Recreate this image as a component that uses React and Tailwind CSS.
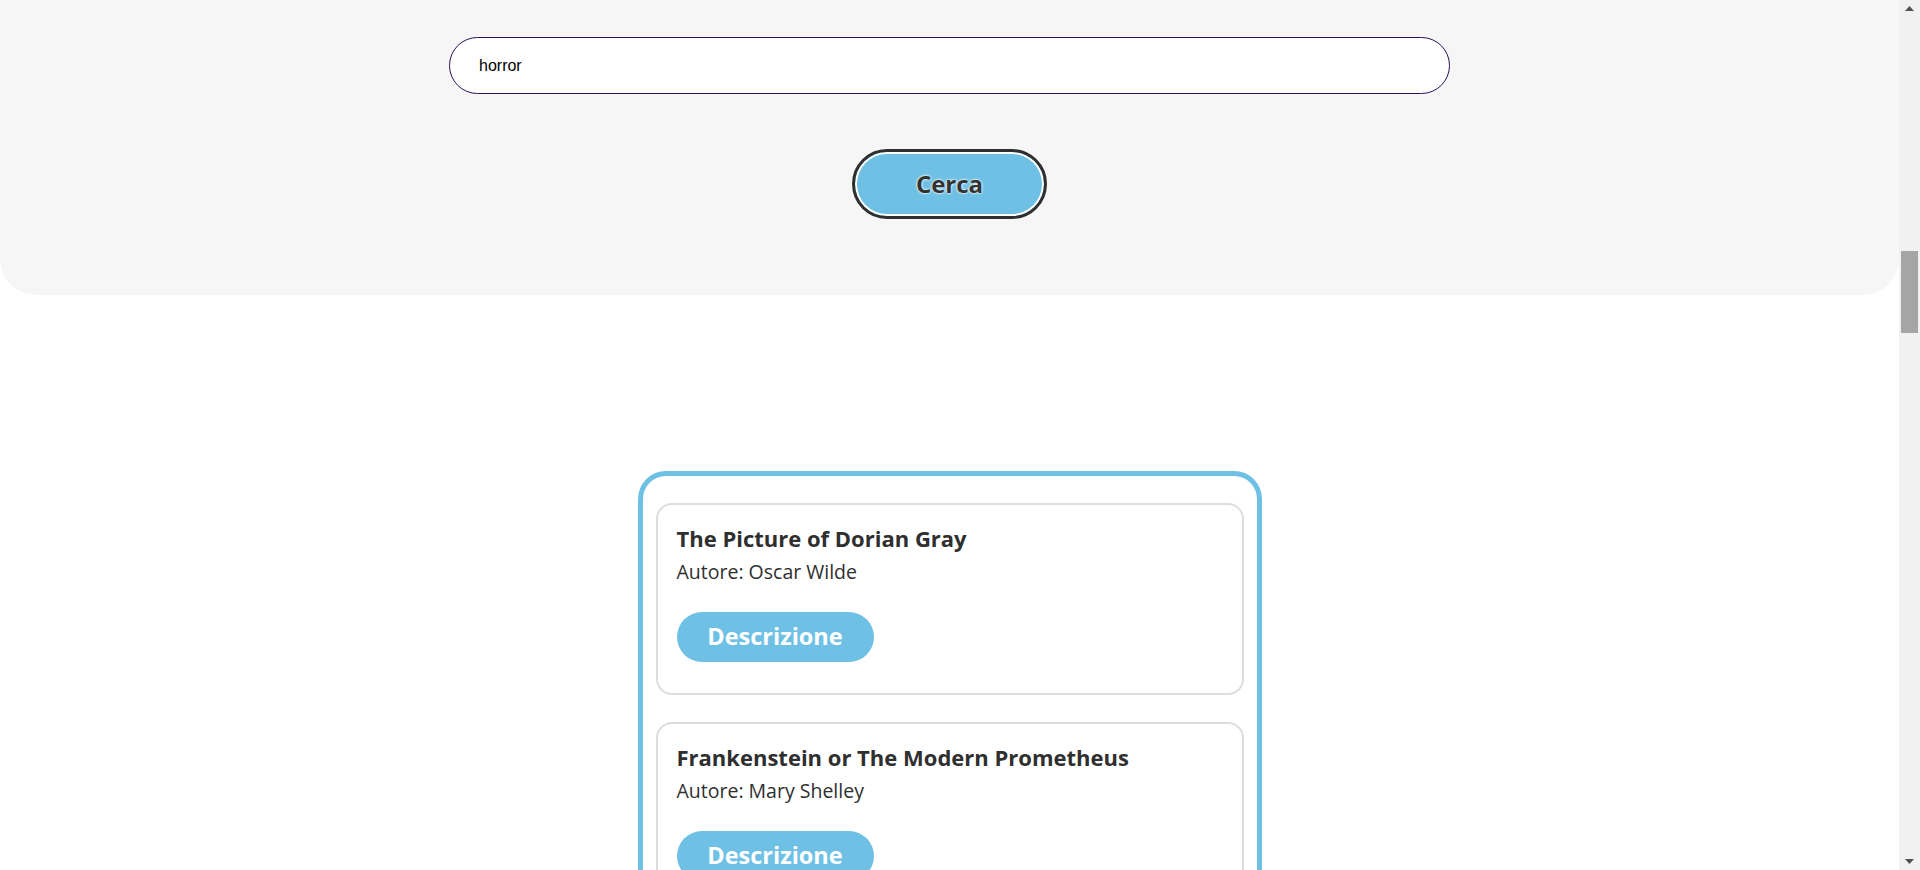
import { useState } from 'react';

const books = [
  { title: 'The Picture of Dorian Gray', author: 'Oscar Wilde' },
  { title: 'Frankenstein or The Modern Prometheus', author: 'Mary Shelley' },
  { title: 'Dracula', author: 'Bram Stoker' },
  { title: 'The Strange Case of Dr Jekyll and Mr Hyde', author: 'Robert Louis Stevenson' },
];

// scheda singola del libro
const BookCard = ({ title, author }) => (
  <div className="border-2 border-[#dddddd] rounded-[16px] bg-white px-[19px] pt-[18px] pb-[31px]">
    <h3 className="text-[22px] leading-[30px] font-bold text-[#2f2f2f]">{title}</h3>
    <p className="mt-[6px] text-[19.5px] leading-[26px] text-[#2f2f2f]">Autore: {author}</p>
    <button className="mt-[27px] w-[197px] h-[50px] rounded-full bg-[#6ec1e4] text-white text-[23.5px] font-bold flex items-center justify-center">
      Descrizione
    </button>
  </div>
);

// barra di scorrimento della finestra (com'è nello screenshot)
const ScrollBar = () => (
  <div className="w-[21px] shrink-0 h-full bg-[#f1f1f1] flex flex-col items-center">
    <div className="h-[17px] w-full flex items-center justify-center">
      <svg width="9" height="5" viewBox="0 0 9 5"><polygon points="0,5 4.5,0 9,5" fill="#505050" /></svg>
    </div>
    <div className="mt-[234px] w-[17px] h-[82px] bg-[#a5a5a5]" />
    <div className="flex-1" />
    <div className="h-[17px] w-full flex items-center justify-center">
      <svg width="9" height="5" viewBox="0 0 9 5"><polygon points="0,0 9,0 4.5,5" fill="#505050" /></svg>
    </div>
  </div>
);

export default function App() {
  const [query, setQuery] = useState('horror');

  return (
    <div className="flex h-screen overflow-hidden bg-white font-['Open_Sans','Noto_Sans',sans-serif]">
      <main className="flex-1 min-w-0 h-full overflow-hidden">
        <section className="bg-[#f6f6f6] rounded-b-[36px] pt-[37px] pb-[76px] flex flex-col items-center">
          <input
            type="text"
            value={query}
            onChange={(e) => setQuery(e.target.value)}
            className="w-[1001px] h-[57px] rounded-full border border-[#2b1256] bg-white pl-[29px] pr-6 text-[16px] text-black font-['Liberation_Sans',Arial,sans-serif] outline-none"
          />
          <button className="mt-[55px] w-[195px] h-[70px] rounded-full border-[3px] border-[#2f2f2f] bg-[#6ec1e4] shadow-[inset_0_0_0_2px_#ffffff] flex items-center justify-center text-[24px] font-bold text-[#333333] [text-shadow:0_0_3px_#ffffff,0_0_2px_#ffffff]">
            Cerca
          </button>
        </section>

        <div className="mt-[176px] mx-auto w-[624px] border-[5px] border-[#6ec1e4] rounded-[28px] px-[13px] pt-[27px] pb-[27px] flex flex-col gap-[27px]">
          {books.map((b) => (
            <BookCard key={b.title} title={b.title} author={b.author} />
          ))}
        </div>
      </main>
      <ScrollBar />
    </div>
  );
}
